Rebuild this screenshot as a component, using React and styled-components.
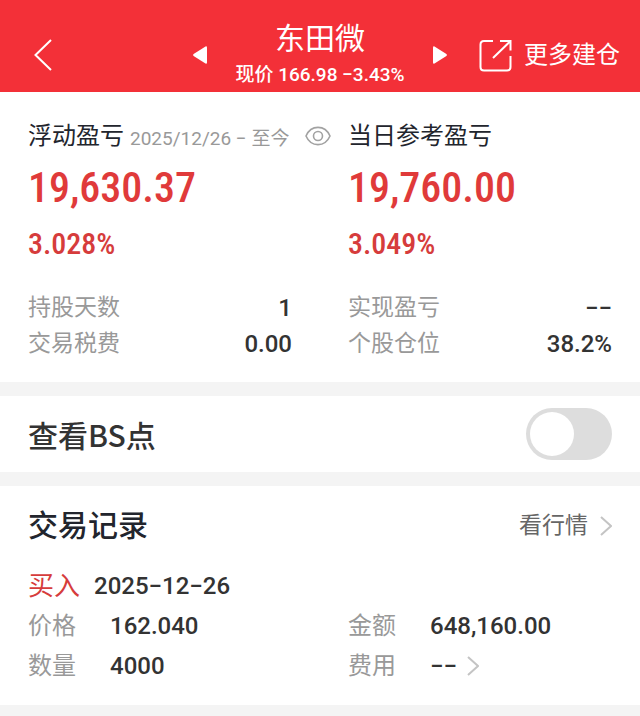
import React, { useState } from 'react';
import styled, { createGlobalStyle } from 'styled-components';

const profits = [
  {
    title: '浮动盈亏',
    period: '2025/12/26 − 至今',
    amount: '19,630.37',
    percent: '3.028%',
    stats: [
      { name: '持股天数', value: '1' },
      { name: '交易税费', value: '0.00' },
    ],
  },
  {
    title: '当日参考盈亏',
    amount: '19,760.00',
    percent: '3.049%',
    stats: [
      { name: '实现盈亏', value: '−−' },
      { name: '个股仓位', value: '38.2%' },
    ],
  },
];

const tradeDetails = [
  { name: '价格', value: '162.040' },
  { name: '金额', value: '648,160.00' },
  { name: '数量', value: '4000' },
  { name: '费用', value: '−−', more: true },
];

function Chevron() {
  return (
    <ChevronIcon viewBox="0 0 12 20" aria-hidden="true">
      <path d="M1 1 L11 10 L1 19" />
    </ChevronIcon>
  );
}

function Header() {
  return (
    <StyledHeader>
      <BackButton type="button" aria-label="返回">
        <svg width="18" height="32" viewBox="0 0 18 32" fill="none" stroke="#fff" strokeWidth="2">
          <path d="M17 1 L1.500 16 L17 31" />
        </svg>
      </BackButton>
      <StockNav>
        <IconButton type="button" aria-label="上一只">
          <svg width="14" height="18" viewBox="0 0 14 18" fill="#fff">
            <path d="M0.600 8 L12.500 0.400 Q14 0 14 1.500 V16.500 Q14 18 12.500 17.600 L0.600 10 Q-0.400 9 0.600 8 Z" />
          </svg>
        </IconButton>
        <Stock>
          <h1>东田微</h1>
          <p>现价 166.98 −3.43%</p>
        </Stock>
        <IconButton type="button" aria-label="下一只">
          <svg width="14" height="18" viewBox="0 0 14 18" fill="#fff">
            <path d="M13.400 8 L1.500 0.400 Q0 0 0 1.500 V16.500 Q0 18 1.500 17.600 L13.400 10 Q14.400 9 13.400 8 Z" />
          </svg>
        </IconButton>
      </StockNav>
      <MoreLink href="#more">
        <svg width="33" height="33" viewBox="0 0 33 33" fill="none" stroke="#fff" strokeWidth="2">
          <path d="M14 2 H5 Q1.500 2 1.500 5.500 V28 Q1.500 31.500 5 31.500 H28 Q31.500 31.500 31.500 28 V17" />
          <path d="M21 2 H31.500 V11.500 M31 2.500 L14 19" />
        </svg>
        更多建仓
      </MoreLink>
    </StyledHeader>
  );
}

function Profit({ profit }) {
  return (
    <div>
      <ProfitTitle>
        <h2>{profit.title}</h2>
        {profit.period && (
          <>
            <span>{profit.period}</span>
            <IconButton type="button" aria-label="隐藏金额">
              <svg width="26" height="20" viewBox="0 0 26 20" fill="none" stroke="#a2a2a2" strokeWidth="1.600">
                <path d="M1 10 C6 -1.500 20 -1.500 25 10 C20 21.500 6 21.500 1 10 Z" />
                <circle cx="13" cy="10" r="4.500" />
              </svg>
            </IconButton>
          </>
        )}
      </ProfitTitle>
      <Amount>{profit.amount}</Amount>
      <Percent>{profit.percent}</Percent>
      <dl>
        {profit.stats.map((stat) => (
          <Stat key={stat.name}>
            <dt>{stat.name}</dt>
            <dd>{stat.value}</dd>
          </Stat>
        ))}
      </dl>
    </div>
  );
}

function App() {
  const [showPoints, setShowPoints] = useState(false);

  return (
    <>
      <GlobalStyle />
      <Header />
      <Page>
        <Summary>
          {profits.map((profit) => (
            <Profit key={profit.title} profit={profit} />
          ))}
        </Summary>

        <PointsRow>
          <label htmlFor="points">查看BS点</label>
          <Switch
            id="points"
            type="checkbox"
            checked={showPoints}
            onChange={(e) => setShowPoints(e.target.checked)}
          />
        </PointsRow>

        <Records>
          <RecordsTop>
            <h2>交易记录</h2>
            <a href="#quote">
              看行情
              <Chevron />
            </a>
          </RecordsTop>
          <TradeTop>
            <strong>买入</strong>
            <time dateTime="2025-12-26">2025−12−26</time>
          </TradeTop>
          <TradeGrid>
            {tradeDetails.map((detail) => (
              <Detail key={detail.name}>
                <dt>{detail.name}</dt>
                <dd>
                  {detail.value}
                  {detail.more && <Chevron />}
                </dd>
              </Detail>
            ))}
          </TradeGrid>
        </Records>
      </Page>
    </>
  );
}

const GlobalStyle = createGlobalStyle`
  * {
    box-sizing: border-box;
  }
  body {
    margin: 0;
    background: #f4f4f4;
    color: #333;
    font-family: Roboto, 'Noto Sans CJK SC', sans-serif;
  }
  h1, h2, p, dl, dd {
    margin: 0;
    font-weight: 400;
  }
  a {
    text-decoration: none;
  }
`

const IconButton = styled.button`
  display: flex;
  padding: 0;
  border: 0;
  background: none;
  cursor: pointer;
`

const BackButton = styled(IconButton)`
  justify-self: start;
  padding: 0 14px;
`

const ChevronIcon = styled.svg`
  width: 12px;
  height: 20px;
  fill: none;
  stroke: #c4c4c4;
  stroke-width: 2;
`

const StyledHeader = styled.header`
  display: grid;
  grid-template-columns: 1fr auto 1fr;
  align-items: center;
  padding: 18px 20px 0;
  min-height: 92px;
  background: #f33038;
  color: #fff;
`

const StockNav = styled.nav`
  display: flex;
  align-items: center;
  gap: 28px;
`

const Stock = styled.div`
  text-align: center;
  white-space: nowrap;

  h1 {
    font-size: 30px;
    line-height: 40px;
  }
  p {
    font-size: 19px;
    line-height: 32px;
    font-weight: 500;
  }
`

const MoreLink = styled.a`
  display: flex;
  align-items: center;
  justify-self: end;
  gap: 12px;
  color: #fff;
  font-size: 24px;
  line-height: 32px;
  white-space: nowrap;
`

const Page = styled.main`
  display: flex;
  flex-direction: column;
  gap: 14px;
`

const Summary = styled.section`
  display: grid;
  grid-template-columns: 1fr 1fr;
  gap: 56px;
  padding: 28px 28px 20px;
  background: #fff;

  > div {
    min-width: 0;
  }
`

const ProfitTitle = styled.div`
  display: flex;
  align-items: center;
  height: 32px;
  white-space: nowrap;

  h2 {
    color: #22252d;
    font-size: 24px;
    line-height: 32px;
  }
  span {
    margin: 0 16px 0 6px;
    color: #999;
    font-size: 19px;
  }
`

const Amount = styled.p`
  color: #e03a3a;
  font-family: 'Roboto Condensed', Roboto, sans-serif;
  font-size: 42px;
  font-weight: 500;
  line-height: 72px;
`

const Percent = styled.p`
  margin-bottom: 26px;
  color: #d63c3c;
  font-family: 'Roboto Condensed', Roboto, sans-serif;
  font-size: 30px;
  font-weight: 500;
  line-height: 40px;
`

const Stat = styled.div`
  display: flex;
  justify-content: space-between;
  line-height: 36px;

  dt {
    color: #999;
    font-size: 23px;
  }
  dd {
    font-size: 24px;
    font-weight: 500;
  }
`

const PointsRow = styled.section`
  display: flex;
  align-items: center;
  justify-content: space-between;
  padding: 12px 28px;
  background: #fff;

  label {
    font-family: 'Noto Sans CJK SC', sans-serif;
    font-size: 30px;
    font-weight: 500;
    line-height: 48px;
  }
`

const Switch = styled.input`
  appearance: none;
  display: flex;
  align-items: center;
  width: 86px;
  height: 52px;
  margin: 0;
  padding: 0 4px;
  border-radius: 26px;
  background: ${(props) => (props.checked ? '#f33038' : '#ddd')};
  cursor: pointer;

  &::before {
    content: '';
    width: 44px;
    height: 44px;
    margin-left: ${(props) => (props.checked ? 'auto' : '0')};
    border-radius: 50%;
    background: #fff;
  }
`

const Records = styled.section`
  padding: 16px 28px 19px;
  background: #fff;
`

const RecordsTop = styled.div`
  display: flex;
  align-items: center;
  justify-content: space-between;
  margin-bottom: 16px;

  h2 {
    color: #22252d;
    font-size: 30px;
    font-weight: 500;
    line-height: 48px;
  }
  a {
    display: flex;
    align-items: center;
    gap: 12px;
    color: #666;
    font-size: 23px;
    line-height: 32px;
  }
`

const TradeTop = styled.div`
  display: flex;
  align-items: center;
  gap: 14px;
  line-height: 40px;

  strong {
    color: #d63c3c;
    font-size: 26px;
    font-weight: 400;
  }
  time {
    font-size: 24px;
    font-weight: 500;
  }
`

const TradeGrid = styled.dl`
  display: grid;
  grid-template-columns: 1fr 1fr;
  column-gap: 56px;
`

const Detail = styled.div`
  display: grid;
  grid-template-columns: 82px 1fr;
  font-size: 24px;
  line-height: 40px;

  dt {
    color: #999;
  }
  dd {
    display: flex;
    align-items: center;
    gap: 10px;
    font-weight: 500;
  }
`

export default App;
